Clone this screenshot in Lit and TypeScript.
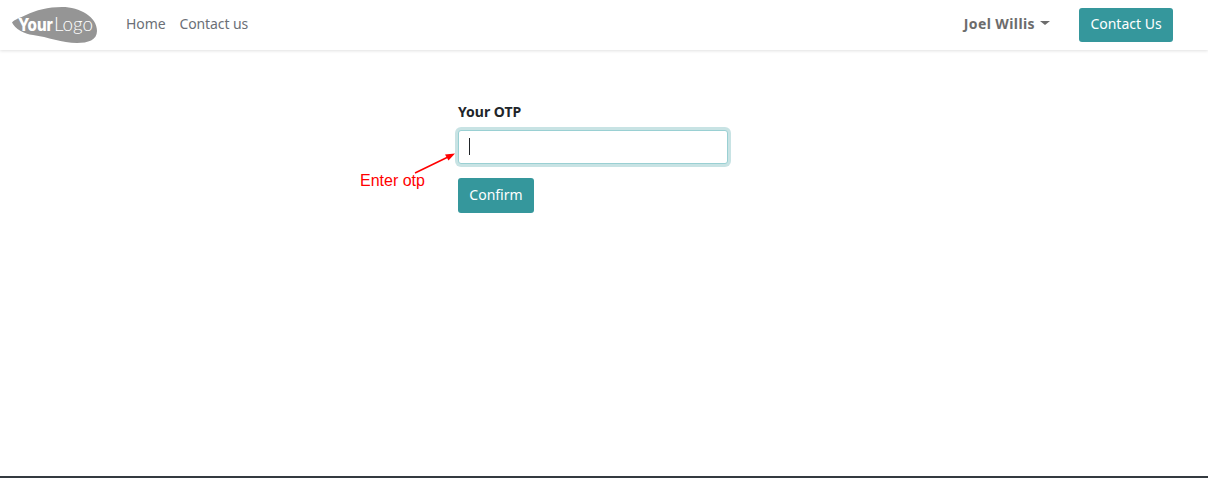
import { LitElement, html, css } from 'lit';
import { customElement } from 'lit/decorators.js';

@customElement('app-root')
export class AppRoot extends LitElement {
  static styles = css`
    :host {
      display: flex;
      flex-direction: column;
      min-height: 100vh;
      font-family: 'Noto Sans', 'Open Sans', sans-serif;
      font-size: 14px;
      color: #212529;
      background: #fff;
    }
    .navbar {
      display: flex;
      align-items: center;
      height: 50px;
      padding: 0 35px 0 12px;
      box-sizing: border-box;
      background: #fff;
      box-shadow: 0 1px 3px rgba(0, 0, 0, 0.12);
    }
    .logo {
      display: block;
      width: 86px;
      height: 36px;
      margin-right: 28px;
    }
    .logo text {
      fill: #fff;
    }
    .logo .your {
      font-family: 'Inter', 'Liberation Sans', sans-serif;
      font-size: 17px;
      font-weight: 800;
    }
    .logo .mark {
      font-family: 'Lato', 'Liberation Sans', sans-serif;
      font-size: 19px;
      font-weight: 300;
    }
    .nav-link {
      color: #6b6f76;
      margin-right: 14px;
      padding-bottom: 4px;
      letter-spacing: -0.1px;
    }
    .spacer {
      flex: 1;
    }
    .user {
      display: flex;
      align-items: center;
      font-weight: 700;
      color: #6c6c6c;
      margin-right: 29px;
      padding-bottom: 4px;
      letter-spacing: 0.4px;
    }
    .user .tri {
      width: 0;
      height: 0;
      margin-left: 5px;
      border-left: 5px solid transparent;
      border-right: 5px solid transparent;
      border-top: 4.5px solid #6c6c6c;
    }
    .btn {
      display: flex;
      align-items: center;
      justify-content: center;
      box-sizing: border-box;
      background: #35979c;
      color: #fff;
      border-radius: 3px;
    }
    .contact {
      width: 94px;
      height: 34px;
      padding-bottom: 3px;
    }
    .main {
      flex: 1;
      display: flex;
      flex-direction: column;
      align-items: flex-start;
      padding: 52px 0 0 458px;
      position: relative;
    }
    label {
      font-weight: 700;
      line-height: 20px;
      margin-bottom: 8px;
    }
    .field {
      position: relative;
      width: 270px;
      height: 34px;
      margin-bottom: 14px;
    }
    input {
      display: block;
      width: 100%;
      height: 100%;
      box-sizing: border-box;
      margin: 0;
      padding: 0 10px;
      border: 1px solid #9ad0d3;
      border-radius: 3px;
      outline: none;
      background: #fff;
      box-shadow: 0 0 0 3px rgba(53, 151, 156, 0.27);
    }
    .caret {
      position: absolute;
      left: 11px;
      top: 8px;
      width: 1px;
      height: 17px;
      background: #212529;
    }
    .confirm {
      width: 76px;
      height: 35px;
      padding-bottom: 2px;
    }
    .note {
      position: absolute;
      left: 360px;
      top: 122px;
      color: #ff0000;
      font-family: 'Liberation Sans', sans-serif;
      font-size: 16px;
      line-height: 18px;
    }
    .arrow {
      position: absolute;
      left: 410px;
      top: 98px;
      width: 50px;
      height: 30px;
    }
    .footer {
      height: 2px;
      background: #343a40;
    }
  `;

  render() {
    return html`
      <header class="navbar">
        <svg class="logo" viewBox="0 0 86 36" aria-label="Your Logo">
          <path
            fill="#959595"
            d="M0 15.5C3 12 8 11 14 8C24 3 36 0 50 0C68 0 85 10 85 24C85 33 76 36 65 36C50 36 36 30 21 28C12 27 3 22 0 15.5Z"
          />
          <text class="your" x="6" y="24" textLength="35" lengthAdjust="spacingAndGlyphs">Your</text>
          <text class="mark" x="42" y="24" textLength="39" lengthAdjust="spacingAndGlyphs">Logo</text>
        </svg>
        <span class="nav-link">Home</span>
        <span class="nav-link">Contact us</span>
        <span class="spacer"></span>
        <span class="user">Joel Willis<span class="tri"></span></span>
        <span class="btn contact">Contact Us</span>
      </header>
      <main class="main">
        <label for="otp">Your OTP</label>
        <div class="field">
          <input id="otp" type="text" />
          <span class="caret"></span>
        </div>
        <span class="btn confirm">Confirm</span>
        <svg class="arrow" viewBox="0 0 50 30">
          <line x1="5" y1="25" x2="38" y2="9" stroke="#ff0000" stroke-width="1.5" />
          <path fill="#ff0000" d="M45 5.5L35 6.5L38.5 12.5Z" />
        </svg>
        <span class="note">Enter otp</span>
      </main>
      <div class="footer"></div>
    `;
  }
}
